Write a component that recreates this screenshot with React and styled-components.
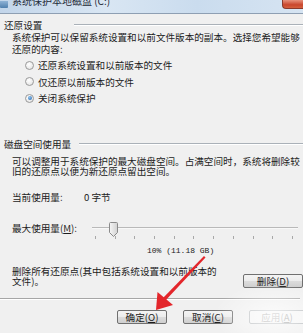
import React from "react";
import styled, { createGlobalStyle } from "styled-components";

const GlobalStyle = createGlobalStyle`
  html, body {
    margin: 0;
    padding: 0;
    background: #f0f0f0;
  }
  body {
    font-family: "Noto Sans CJK SC", "Noto Sans", sans-serif;
  }
`;

const Window = styled.div`
  position: relative;
  width: 303px;
  height: 333px;
  overflow: hidden;
  background: #f0f0f0;
  color: #1c1c1c;
  font-size: 9.6px;
`;

const TitleBar = styled.div`
  height: 13px;
  display: flex;
  align-items: flex-start;
  overflow: hidden;
  background: linear-gradient(to right, #c2d5ea 0%, #d9e6f3 35%, #cadcee 65%, #d6e4f2 100%);
  border-bottom: 1px solid #8e9fb3;
`;

const TitleIcon = styled.div`
  width: 8px;
  height: 7px;
  margin-top: 1px;
  background: linear-gradient(#8fb3d6, #4f7fae);
  border-radius: 0 0 1px 1px;
`;

const TitleText = styled.div`
  margin: -5px 0 0 4px;
  font-size: 10px;
  line-height: 12px;
  color: #1e2a38;
  white-space: nowrap;
`;

const CloseButton = styled.div`
  margin-left: auto;
  width: 20px;
  height: 8px;
  border-radius: 0 0 0 4px;
  background: linear-gradient(#e7917c, #c9462c 60%, #d5603e);
  border: 1px solid #8a3a2c;
  border-top: none;
  border-right: none;
`;

const Content = styled.div`
  padding-top: 6px;
`;

const Heading = styled.div`
  display: flex;
  align-items: center;
  height: 10px;
  padding-left: 4px;
  margin-top: ${p => p.$top || 0}px;
  white-space: nowrap;
`;

const HeadingLine = styled.div`
  flex: 1;
  margin-left: ${p => p.$gap}px;
  border-top: 1px solid #aab1b8;
  border-bottom: 1px solid #ffffff;
`;

const Paragraph = styled.div`
  padding-left: 12px;
  margin-top: ${p => p.$top}px;
  line-height: ${p => p.$lh}px;
  white-space: nowrap;
`;

const RadioList = styled.div`
  margin-top: 2px;
  padding-left: 25px;
`;

const RadioRow = styled.div`
  display: flex;
  align-items: center;
  gap: 4px;
  height: 16.5px;
`;

const RadioCircle = styled.span`
  box-sizing: border-box;
  width: 9px;
  height: 9px;
  border-radius: 50%;
  border: 1px solid #9a9a9a;
  background: radial-gradient(circle at 40% 35%, #ffffff, #dedede);
  display: flex;
  align-items: center;
  justify-content: center;

  &::after {
    content: "";
    display: ${p => (p.$checked ? "block" : "none")};
    width: 4px;
    height: 4px;
    border-radius: 50%;
    background: radial-gradient(circle at 40% 35%, #8ec4f0, #1f5fa8);
  }
`;

const InfoRow = styled.div`
  display: flex;
  padding-left: 12px;
  margin-top: 16px;
  line-height: 10px;
`;

const InfoLabel = styled.span`
  width: 72px;
`;

const SliderRow = styled.div`
  display: flex;
  align-items: flex-start;
  margin-top: 18px;
`;

const SliderLabel = styled.span`
  width: 80px;
  padding-left: 12px;
  line-height: 16px;
  white-space: nowrap;
`;

const SliderArea = styled.div`
  position: relative;
  flex: 1;
  height: 22px;
  margin-right: 5px;
`;

const Track = styled.div`
  margin-top: 7px;
  height: 0;
  border-top: 1px solid #b9b9b9;
  border-bottom: 1px solid #f8f8f8;
`;

const Thumb = styled.svg`
  position: absolute;
  left: 17px;
  top: 2px;
`;

const Ticks = styled.div`
  display: flex;
  justify-content: space-between;
  margin: 7px 5px 0 3px;
`;

const Tick = styled.span`
  width: 1px;
  height: 3px;
  background: #a8a8a8;
`;

const Percent = styled.div`
  margin-top: 4px;
  padding-left: 147px;
  font-family: "Liberation Mono", monospace;
  font-size: 8px;
  line-height: 10px;
`;

const DeleteRow = styled.div`
  display: flex;
  align-items: flex-start;
  margin-top: 11px;
`;

const DeleteText = styled.div`
  padding-left: 12px;
  line-height: 9.5px;
  white-space: nowrap;
`;

const Button = styled.div`
  box-sizing: border-box;
  flex-shrink: 0;
  width: ${p => p.$w || 50}px;
  height: 14px;
  margin-top: ${p => p.$top || 0}px;
  margin-left: ${p => (p.$push ? "auto" : "0")};
  border: 1px solid ${p => (p.$disabled ? "#b5b9bc" : "#707070")};
  border-radius: 2px;
  background: ${p =>
    p.$disabled
      ? "#f4f4f4"
      : "linear-gradient(#f4f4f4 0%, #ececec 48%, #dcdcdc 52%, #cfcfcf 100%)"};
  color: ${p => (p.$disabled ? "#9a9a9a" : "#1c1c1c")};
  text-align: center;
  line-height: 12px;
  white-space: nowrap;
`;

const Separator = styled.div`
  margin-top: 10px;
  margin-right: 3px;
  border-top: 1px solid #a6a6a6;
  border-bottom: 1px solid #ffffff;
`;

const ButtonBar = styled.div`
  display: flex;
  gap: 16px;
  margin-top: 10px;
  padding-left: 117px;
`;

const Overlay = styled.svg`
  position: absolute;
  left: 0;
  top: 0;
  pointer-events: none;
`;

const Watermark = styled.div`
  position: absolute;
  right: -20px;
  bottom: -10px;
  width: 110px;
  height: 60px;
  pointer-events: none;
  background: radial-gradient(ellipse at 55% 55%, rgba(255, 255, 255, 0.75), rgba(255, 255, 255, 0) 70%);
`;

const radios = [
  { label: "还原系统设置和以前版本的文件", checked: false },
  { label: "仅还原以前版本的文件", checked: false },
  { label: "关闭系统保护", checked: true }
];

export default function App() {
  return (
    <Window>
      <GlobalStyle />
      <TitleBar>
        <TitleIcon />
        <TitleText>系统保护本地磁盘 (C:)</TitleText>
        <CloseButton />
      </TitleBar>
      <Content>
        <Heading>
          还原设置
          <HeadingLine $gap={32} />
        </Heading>
        <Paragraph $top={2} $lh={11.5}>
          系统保护可以保留系统设置和以前文件版本的副本。选择您希望能够
          <br />
          还原的内容:
        </Paragraph>
        <RadioList>
          {radios.map(r => (
            <RadioRow key={r.label}>
              <RadioCircle $checked={r.checked} />
              {r.label}
            </RadioRow>
          ))}
        </RadioList>

        <Heading $top={32.5}>
          磁盘空间使用量
          <HeadingLine $gap={8} />
        </Heading>
        <Paragraph $top={7} $lh={10}>
          可以调整用于系统保护的最大磁盘空间。占满空间时，系统将删除较
          <br />
          旧的还原点以便为新还原点留出空间。
        </Paragraph>
        <InfoRow>
          <InfoLabel>当前使用量:</InfoLabel>
          <span>0 字节</span>
        </InfoRow>
        <SliderRow>
          <SliderLabel>
            最大使用量(<u>M</u>):
          </SliderLabel>
          <SliderArea>
            <Track />
            <Thumb width="9" height="15" viewBox="0 0 9 15">
              <defs>
                <linearGradient id="thumbFill" x1="0" x2="1" y1="0" y2="0">
                  <stop offset="0" stopColor="#f6f6f6" />
                  <stop offset="1" stopColor="#d2d2d2" />
                </linearGradient>
              </defs>
              <path
                d="M1.5 0.5 H7.5 Q8.5 0.5 8.5 1.5 V10.5 L4.5 14.5 L0.5 10.5 V1.5 Q0.5 0.5 1.5 0.5 Z"
                fill="url(#thumbFill)"
                stroke="#8a8a8a"
              />
            </Thumb>
            <Ticks>
              {Array.from({ length: 11 }, (_, i) => (
                <Tick key={i} />
              ))}
            </Ticks>
          </SliderArea>
        </SliderRow>
        <Percent>10% (11.18 GB)</Percent>
        <DeleteRow>
          <DeleteText>
            删除所有还原点(其中包括系统设置和以前版本的
            <br />
            文件)。
          </DeleteText>
          <Button $w={60} $top={7} $push>
            删除(<u>D</u>)
          </Button>
        </DeleteRow>
        <Separator />
        <ButtonBar>
          <Button>
            确定(<u>O</u>)
          </Button>
          <Button>
            取消(<u>C</u>)
          </Button>
          <Button $w={56} $disabled>
            应用(<u>A</u>)
          </Button>
        </ButtonBar>
      </Content>
      <Watermark />
      <Overlay width="303" height="333" viewBox="0 0 303 333">
        <path d="M204 256 L205.5 257.5 L165 301 L162.5 298.5 Z" fill="#e3262b" />
        <path d="M156 310 L157.5 292 L173 305 Z" fill="#e3262b" />
      </Overlay>
    </Window>
  );
}
